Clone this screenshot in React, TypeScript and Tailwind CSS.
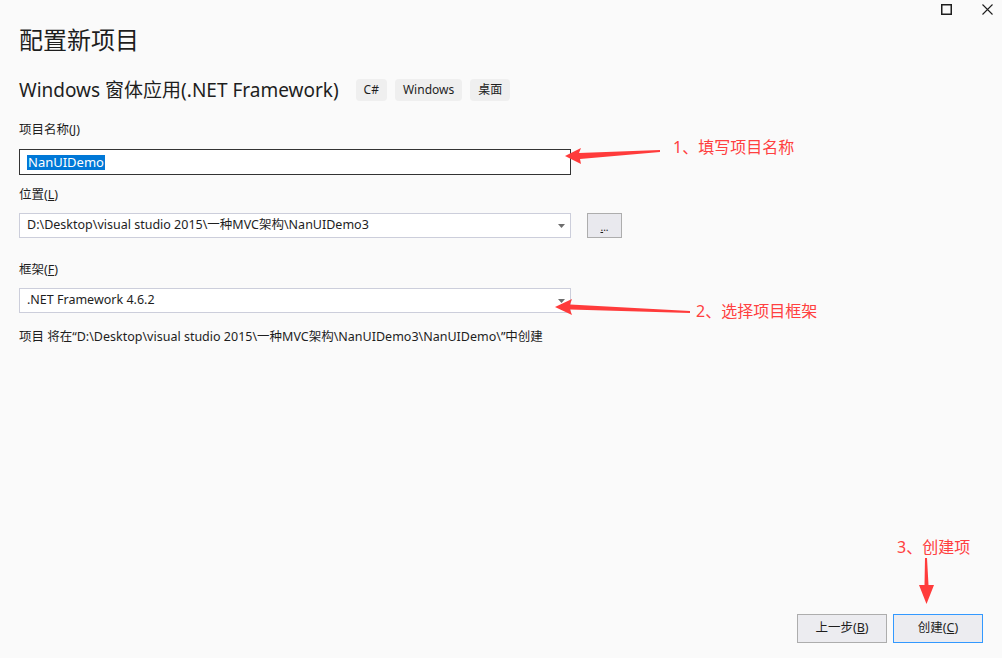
const font = "font-['Noto_Sans','Noto_Sans_CJK_SC',sans-serif]";

function Tag({ text }: { text: string }) {
  return (
    <span className="flex h-[22px] items-center rounded-[4px] bg-[#efefef] px-[8px] text-[12px] text-[#1e1e1e]">
      {text}
    </span>
  );
}

function Label({ text, keyChar }: { text: string; keyChar: string }) {
  return (
    <div className="text-[12.5px] leading-[16px] text-[#1e1e1e]">
      {text}(<u>{keyChar}</u>)
    </div>
  );
}

function Select({ value }: { value: string }) {
  return (
    <div className="flex h-[25px] w-[552px] items-center justify-between border border-[#cccedb] bg-white pl-[7px] pr-[5px] text-[12.5px] text-[#1e1e1e]">
      <span>{value}</span>
      <svg width="7" height="4" viewBox="0 0 7 4">
        <path d="M0 0h7L3.5 4z" fill="#6d6d6d" />
      </svg>
    </div>
  );
}

export default function App() {
  return (
    <div className={`relative flex h-[658px] w-[1002px] flex-col overflow-hidden bg-[#fafafa] ${font}`}>
      {/* window chrome */}
      <div className="flex h-[24px] justify-end gap-[30px] pr-[9px] pt-[4px]">
        <svg width="11" height="11" viewBox="0 0 11 11">
          <rect x="0.75" y="0.75" width="9.5" height="9.5" fill="none" stroke="#1e1e1e" strokeWidth="1.5" />
        </svg>
        <svg width="11" height="11" viewBox="0 0 11 11">
          <path d="M0.5 0.5l10 10M10.5 0.5l-10 10" stroke="#1e1e1e" strokeWidth="1.1" />
        </svg>
      </div>

      <div className="flex flex-col px-[19px]">
        <h1 className="text-[24px] leading-[32px] text-[#1e1e1e]">配置新项目</h1>

        <div className="mt-[20px] flex h-[28px] items-center">
          <span className="text-[19px] leading-[28px] text-[#1e1e1e]">Windows 窗体应用(.NET Framework)</span>
          <div className="ml-[17px] flex gap-[8px]">
            <Tag text="C#" />
            <Tag text="Windows" />
            <Tag text="桌面" />
          </div>
        </div>

        <div className="mt-[18px]">
          <Label text="项目名称" keyChar="J" />
        </div>
        <div className="mt-[11px] flex h-[26px] w-[552px] items-center border border-[#333333] bg-white pl-[7px]">
          <span className="bg-[#0078d7] px-[1px] text-[13px] leading-[15px] text-white">NanUIDemo</span>
        </div>

        <div className="mt-[12px]">
          <Label text="位置" keyChar="L" />
        </div>
        <div className="mt-[10px] flex items-center gap-[16px]">
          <Select value="D:\Desktop\visual studio 2015\一种MVC架构\NanUIDemo3" />
          <button className="flex h-[25px] w-[35px] items-end justify-center border border-[#adadad] bg-[#e9e9ee] pb-[5px] text-[10px] leading-[10px] text-[#1e1e1e]">
            <span>
              <u>.</u>..
            </span>
          </button>
        </div>

        <div className="mt-[24px]">
          <Label text="框架" keyChar="F" />
        </div>
        <div className="mt-[10px]">
          <Select value=".NET Framework 4.6.2" />
        </div>

        <p className="mt-[16px] text-[12.5px] leading-[16px] text-[#1e1e1e]">
          项目 将在“D:\Desktop\visual studio 2015\一种MVC架构\NanUIDemo3\NanUIDemo\”中创建
        </p>
      </div>

      <div className="mt-auto flex justify-end gap-[6px] pb-[15px] pr-[19px]">
        <button className="h-[29px] w-[90px] border border-[#adadad] bg-[#ececf0] text-[12.5px] text-[#1e1e1e]">
          上一步(<u>B</u>)
        </button>
        <button className="h-[29px] w-[90px] border border-[#3399ff] bg-[#ececf0] text-[12.5px] text-[#1e1e1e]">
          创建(<u>C</u>)
        </button>
      </div>

      {/* annotations */}
      <svg className="pointer-events-none absolute inset-0" width="1002" height="658" viewBox="0 0 1002 658">
        <polygon points="565,156 581,148 579,153 660,150 660,152 580,159 581,164" fill="#ff3b3b" />
        <polygon points="555,307 572,299 570,304.5 690,311 690,313 570,309.5 572,315" fill="#ff3b3b" />
        <polygon points="925,558 927,558 928.5,585 934,585 926.5,604 919,585 924.5,585" fill="#ff3b3b" />
      </svg>
      <span className="absolute left-[673px] top-[135px] text-[16px] leading-[24px] text-[#ff4040]">1、填写项目名称</span>
      <span className="absolute left-[696px] top-[299px] text-[16px] leading-[24px] text-[#ff4040]">2、选择项目框架</span>
      <span className="absolute left-[897px] top-[535px] text-[16px] leading-[24px] text-[#ff4040]">3、创建项</span>
    </div>
  );
}
